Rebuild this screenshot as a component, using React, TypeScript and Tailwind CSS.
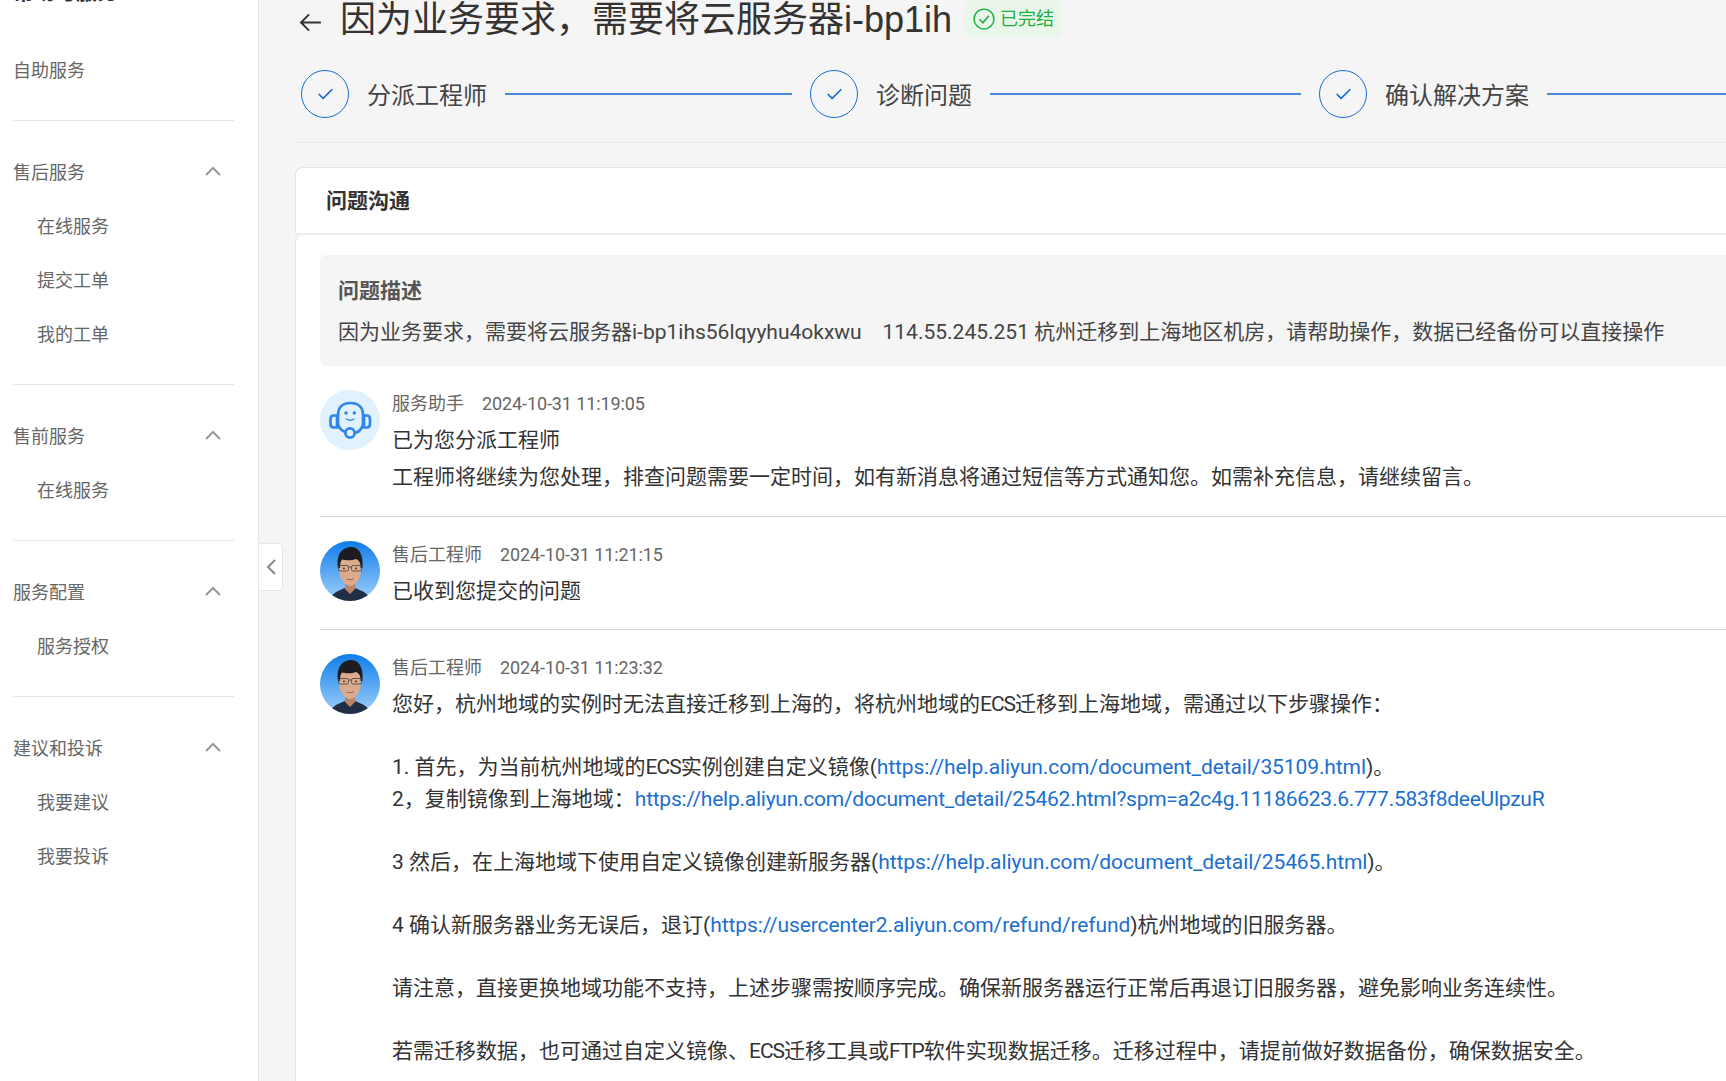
import type { ReactNode } from "react"
import { Check } from "lucide-react"

const cjk = "font-['Liberation_Sans','Noto_Sans_CJK_SC',sans-serif]"
const bodyFont = "font-['Roboto','Noto_Sans_CJK_SC',sans-serif]"

const groups = [
  { title: "售后服务", items: ["在线服务", "提交工单", "我的工单"] },
  { title: "售前服务", items: ["在线服务"] },
  { title: "服务配置", items: ["服务授权"] },
  { title: "建议和投诉", items: ["我要建议", "我要投诉"] },
]

function Sidebar() {
  return (
    <aside className="w-[259px] shrink-0 h-full bg-white border-r border-[#e6e6e6] overflow-hidden pl-[13px] pr-6 text-[18px] text-[#666]">
      <div className="-mt-[20px] h-[24px] leading-[24px] text-[21px] font-bold text-[#333]">帮助与服务</div>
      <div className="h-[40px]" />
      <div className="border-b border-[#e6e6e6] pb-[22px]">
        <div className="h-[54px] flex items-center">自助服务</div>
      </div>
      {groups.map((g, i) => (
        <div key={g.title} className={i < groups.length - 1 ? "pt-[25px] pb-[22px] border-b border-[#e6e6e6]" : "pt-[25px] pb-[22px]"}>
          <div className="h-[54px] flex items-center justify-between pr-[13px]">
            <span>{g.title}</span>
            <svg viewBox="0 0 16 10" className="w-[16px] h-[10px] -mt-[4px]" fill="none" stroke="#999" strokeWidth="2">
              <path d="M1 9 L8 2 L15 9" />
            </svg>
          </div>
          {g.items.map((it) => (
            <div key={it} className="h-[54px] flex items-center pl-[24px]">{it}</div>
          ))}
        </div>
      ))}
    </aside>
  )
}

function Step({ label }: { label: string }) {
  return (
    <div className="flex-1 flex items-center">
      <div className="w-[48px] h-[48px] shrink-0 rounded-full border border-[#1b6fcf] flex items-center justify-center">
        <Check className="w-[19px] h-[19px] text-[#1b6fcf]" strokeWidth={2.2} />
      </div>
      <span className="ml-[18px] text-[24px] leading-[36px] text-[#444] whitespace-nowrap mt-[3px]">{label}</span>
      <div className="flex-1 h-[2px] bg-[#1b6fcf]/80 mx-[18px] -mt-[1px]" />
    </div>
  )
}

function BotAvatar() {
  return (
    <svg viewBox="0 0 60 60" className="w-[60px] h-[60px] shrink-0">
      <circle cx="30" cy="30" r="30" fill="#e1f1fd" />
      <g fill="none" stroke="#2f86ea" strokeWidth="2.7" strokeLinecap="round">
        <path d="M18 25 C18 17 23 13 30.5 13 C38 13 43 17 43 25 V33 C43 38 39 42 35 43" />
        <path d="M18 25 V33 C18 37 21 40 25 42" />
        <path d="M13.5 25.5 H17 V37.5 H13.5 C11 37.5 10.5 35.5 10.5 33.5 V29.5 C10.5 27.5 11 25.5 13.5 25.5 Z" />
        <path d="M44 25.5 H47 C49.5 25.5 50 27.5 50 29.5 V33.5 C50 35.5 49.5 37.5 47 37.5 H44 Z" />
        <circle cx="30" cy="43" r="4.6" />
      </g>
      <path d="M26.5 29 Q30 31.5 34 29" fill="none" stroke="#2f86ea" strokeWidth="1.4" strokeLinecap="round" />
      <circle cx="26" cy="23" r="1.7" fill="#2f86ea" />
      <circle cx="34.3" cy="23" r="1.7" fill="#2f86ea" />
    </svg>
  )
}

function EngineerAvatar({ id }: { id: string }) {
  return (
    <svg viewBox="0 0 60 60" className="w-[60px] h-[60px] shrink-0">
      <defs>
        <linearGradient id={id} x1="0" y1="0" x2="0" y2="1">
          <stop offset="0" stopColor="#0f7de9" />
          <stop offset="1" stopColor="#a2d0fb" />
        </linearGradient>
        <clipPath id={id + "c"}>
          <circle cx="30" cy="30" r="30" />
        </clipPath>
        <filter id={id + "b"}>
          <feGaussianBlur stdDeviation="0.35" />
        </filter>
      </defs>
      <circle cx="30" cy="30" r="30" fill={`url(#${id})`} />
      <g clipPath={`url(#${id}c)`} filter={`url(#${id}b)`}>
        <path d="M9 60 C11 52 18 50 25 47 L35 47 C42 50 49 52 51 60 Z" fill="#222f45" />
        <path d="M25 39 H35 V48 L30 53 L25 48 Z" fill="#b98468" />
        <path d="M19 24 C19 14 41 14 41 24 L40.5 33 C39.5 40 34 45 30 45 C26 45 20.5 40 19.5 33 Z" fill="#dcab8d" />
        <path d="M18 27 C16 16 20 7 30 6 C37 5 44 11 42.5 27 L40.5 27 C41 22 39 19 36 18 C31 20 25 19 22 18.5 C20.5 20 20 23 20 27 Z" fill="#1c1d22" />
        <rect x="18.5" y="24.5" width="10" height="5.5" rx="1.5" fill="none" stroke="#44444a" strokeWidth="0.8" />
        <rect x="31.5" y="24.5" width="10" height="5.5" rx="1.5" fill="none" stroke="#44444a" strokeWidth="0.8" />
        <path d="M28.5 26 H31.5" stroke="#44444a" strokeWidth="0.8" />
        <circle cx="24" cy="27.3" r="0.9" fill="#2a2320" />
        <circle cx="36" cy="27.3" r="0.9" fill="#2a2320" />
        <path d="M26.5 38 Q30 39.5 33.5 38" stroke="#a5604f" strokeWidth="1.1" fill="none" />
      </g>
    </svg>
  )
}

function Meta({ name, time }: { name: string; time: string }) {
  return (
    <div className={`h-[28px] leading-[28px] text-[18px] text-[#666] ${bodyFont}`}>
      <span>{name}</span>
      <span className="ml-[18px] tracking-[-0.1px]">{time}</span>
    </div>
  )
}

function A({ href, long }: { href: string; long?: boolean }) {
  return <span className={long ? "text-[#1b6fcf] tracking-[-0.25px]" : "text-[#1b6fcf] tracking-[-0.1px]"}>{href}</span>
}

// ECS / FTP sit tighter in the reference than Roboto sets them
function Tight({ children }: { children: ReactNode }) {
  return <span className="tracking-[-1px]">{children}</span>
}

export default function App() {
  return (
    <div className={`w-[1726px] h-[1081px] flex overflow-hidden bg-[#f5f5f5] relative ${cjk}`}>
      <Sidebar />

      <button className="absolute left-[258px] top-[543px] w-[25px] h-[48px] bg-white border border-[#e6e6e6] rounded-r-[4px] flex items-center justify-center">
        <svg viewBox="0 0 10 16" className="w-[10px] h-[16px]" fill="none" stroke="#888" strokeWidth="2">
          <path d="M9 1 L2 8 L9 15" />
        </svg>
      </button>

      <main className="flex-1 min-w-0 pl-[36px] overflow-hidden">
        {/* title */}
        <div className="flex items-center h-[36px] w-[1500px] mt-[2px] pl-[4px]">
          <svg viewBox="0 0 24 20" className="w-[23px] h-[19px] mt-[5px] shrink-0" fill="none" stroke="#333" strokeWidth="2">
            <path d="M23 10 H2 M10.5 1.5 L2 10 L10.5 18.5" />
          </svg>
          <h1 className="ml-[18px] text-[36px] leading-[36px] font-normal text-[#333] whitespace-nowrap">因为业务要求，需要将云服务器i-bp1ih</h1>
          <span className="ml-[13px] -mt-[2px] h-[36px] w-[96px] bg-[#e8f7ea] rounded-[5px] flex items-center pl-[8px] text-[18px] text-[#1fae3f]">
            <svg viewBox="0 0 20 20" className="w-[22px] h-[22px] shrink-0" fill="none" stroke="currentColor" strokeWidth="1.3">
              <circle cx="10" cy="10" r="9" />
              <path d="M5.8 10.2 L9 13.4 L14.4 7" strokeWidth="1.5" />
            </svg>
            <span className="ml-[5px]">已完结</span>
          </span>
        </div>

        {/* steps */}
        <div className="flex w-[1533px] mt-[32px] pl-[6px]">
          <Step label="分派工程师" />
          <Step label="诊断问题" />
          <Step label="确认解决方案" />
        </div>
        <div className="h-[1px] bg-[#e8e8e8] mt-[24px]" />

        {/* problem card */}
        <div className="mt-[24px] bg-white border-t border-l border-[#e5e5e5] rounded-tl-[8px]">
          <div className={`h-[65px] flex items-center pl-[30px] text-[21px] font-bold text-[#333] ${cjk}`}>问题沟通</div>
        </div>
        <div className="border-t-2 border-[#eee]" />
        <div className="bg-white border-l border-[#e5e5e5] rounded-tl-[8px] pl-[24px] h-[900px]">
          <div className="pt-[20px]">
            <div className="bg-[#f5f5f5] rounded-l-[6px] h-[111px] pl-[18px] pt-[20px]">
              <div className={`text-[21px] leading-[32px] font-bold text-[#555] ${cjk}`}>问题描述</div>
              <div className={`mt-[9px] text-[21px] leading-[32px] text-[#444] whitespace-nowrap ${bodyFont}`}>
                因为业务要求，需要将云服务器i-bp1ihs56lqyyhu4okxwu{"\u00a0\u00a0\u00a0\u00a0"}114.55.245.251 杭州迁移到上海地区机房，请帮助操作，数据已经备份可以直接操作
              </div>
            </div>
          </div>

          {/* message 1 */}
          <div className="flex gap-[12px] pt-[24px] pb-[20px] border-b border-[#d4d4d4]">
            <BotAvatar />
            <div className={`text-[21px] leading-[37px] text-[#333] ${bodyFont}`}>
              <Meta name="服务助手" time="2024-10-31 11:19:05" />
              <div className="mt-[4px]">已为您分派工程师</div>
              <div>工程师将继续为您处理，排查问题需要一定时间，如有新消息将通过短信等方式通知您。如需补充信息，请继续留言。</div>
            </div>
          </div>

          {/* message 2 */}
          <div className="flex gap-[12px] pt-[24px] pb-[19px] border-b border-[#d4d4d4]">
            <EngineerAvatar id="ava1" />
            <div className={`text-[21px] leading-[37px] text-[#333] ${bodyFont}`}>
              <Meta name="售后工程师" time="2024-10-31 11:21:15" />
              <div className="mt-[4px]">已收到您提交的问题</div>
            </div>
          </div>

          {/* message 3 */}
          <div className="flex gap-[12px] pt-[24px]">
            <EngineerAvatar id="ava2" />
            <div className={`text-[21px] leading-[31.5px] text-[#333] ${bodyFont}`}>
              <Meta name="售后工程师" time="2024-10-31 11:23:32" />
              <div className="mt-[7px] whitespace-nowrap">
                <p>您好，杭州地域的实例时无法直接迁移到上海的，将杭州地域的<Tight>ECS</Tight>迁移到上海地域，需通过以下步骤操作：</p>
                <p className="mt-[31.5px]">1. 首先，为当前杭州地域的<Tight>ECS</Tight>实例创建自定义镜像(<A href="https://help.aliyun.com/document_detail/35109.html" />)。</p>
                <p>2，复制镜像到上海地域：<A long href="https://help.aliyun.com/document_detail/25462.html?spm=a2c4g.11186623.6.777.583f8deeUlpzuR" /></p>
                <p className="mt-[31.5px]">3 然后，在上海地域下使用自定义镜像创建新服务器(<A href="https://help.aliyun.com/document_detail/25465.html" />)。</p>
                <p className="mt-[31.5px]">4 确认新服务器业务无误后，退订(<A href="https://usercenter2.aliyun.com/refund/refund" />)杭州地域的旧服务器。</p>
                <p className="mt-[31.5px]">请注意，直接更换地域功能不支持，上述步骤需按顺序完成。确保新服务器运行正常后再退订旧服务器，避免影响业务连续性。</p>
                <p className="mt-[31.5px]">若需迁移数据，也可通过自定义镜像、<Tight>ECS</Tight>迁移工具或<Tight>FTP</Tight>软件实现数据迁移。迁移过程中，请提前做好数据备份，确保数据安全。</p>
              </div>
            </div>
          </div>
        </div>
      </main>
    </div>
  )
}
